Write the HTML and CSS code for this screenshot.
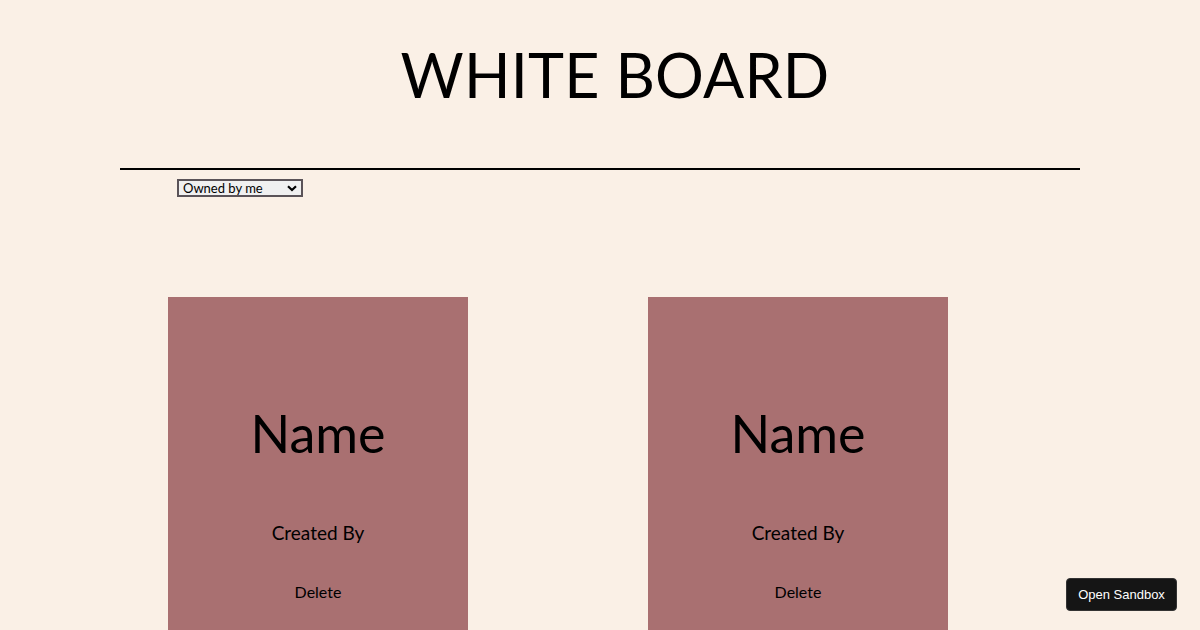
FILE: index.html
```html
<!DOCTYPE html>
<html>
<head>
<meta charset="utf-8">
<link rel="stylesheet" href="styles.css">
</head>
<body>
<div class="page">
  <header class="header">
    <h1 class="title">WHITE BOARD</h1>
  </header>
  <div class="rule"></div>
  <div class="filter">
    <div class="select-wrap">
      <select class="owner-select">
        <option>Owned by me</option>
        <option>Shared with me</option>
      </select>
      <svg class="chevron" width="10" height="7" viewBox="0 0 10 7"><path d="M1 1.2 L5 5 L9 1.2" fill="none" stroke="#000" stroke-width="2.2"/></svg>
    </div>
  </div>
  <main class="boards">
    <div class="card">
      <div class="card-name">Name</div>
      <div class="card-creator">Created By</div>
      <div class="card-delete">Delete</div>
    </div>
    <div class="card">
      <div class="card-name">Name</div>
      <div class="card-creator">Created By</div>
      <div class="card-delete">Delete</div>
    </div>
  </main>
</div>
<button class="sandbox-btn">Open Sandbox</button>
</body>
</html>
```
FILE: styles.css
```css
html, body {
  margin: 0;
  padding: 0;
  background: #faf0e6;
  height: 100%;
  overflow: hidden;
}
body {
  font-family: "Lato", "DejaVu Sans", sans-serif;
  color: #000;
}
.page {
  width: 960px;
  margin: 0 auto;
}
.header {
  height: 168px;
  display: flex;
  justify-content: center;
}
.title {
  margin: 0;
  padding-top: 37px;
  padding-left: 30px;
  font-weight: 400;
  font-size: 61px;
  line-height: 76px;
  letter-spacing: 0.2px;
}
.rule {
  height: 2px;
  background: #000;
}
.filter {
  padding-left: 57px;
  padding-top: 9px;
  height: 20px;
}
.select-wrap {
  position: relative;
  width: 126px;
  height: 18px;
}
.owner-select {
  appearance: none;
  -webkit-appearance: none;
  box-sizing: border-box;
  display: block;
  width: 126px;
  height: 18px;
  margin: 0;
  font-family: "Lato", sans-serif;
  font-size: 13px;
  line-height: 14px;
  color: #000;
  border: 2px solid #5a5358;
  background: #f0f0f0;
  padding: 0 0 0 4px;
  border-radius: 0;
}
.chevron {
  position: absolute;
  right: 6px;
  top: 6px;
  pointer-events: none;
}
.boards {
  display: flex;
  gap: 180px;
  padding-left: 48px;
  padding-top: 98px;
}
.card {
  width: 300px;
  height: 340px;
  background: #a97071;
  display: flex;
  flex-direction: column;
  align-items: center;
}
.card-name {
  margin-top: 104px;
  font-size: 52px;
  line-height: 64px;
}
.card-creator {
  margin-top: 56px;
  font-size: 19px;
  line-height: 24px;
}
.card-delete {
  margin-top: 37px;
  font-size: 16px;
  line-height: 20px;
}
.sandbox-btn {
  position: fixed;
  right: 23px;
  bottom: 19px;
  width: 111px;
  height: 33px;
  background: #151515;
  color: #fff;
  border: 1px solid #333;
  border-radius: 4px;
  font-family: "Liberation Sans", Arial, sans-serif;
  font-size: 13px;
  padding: 0;
}
```
